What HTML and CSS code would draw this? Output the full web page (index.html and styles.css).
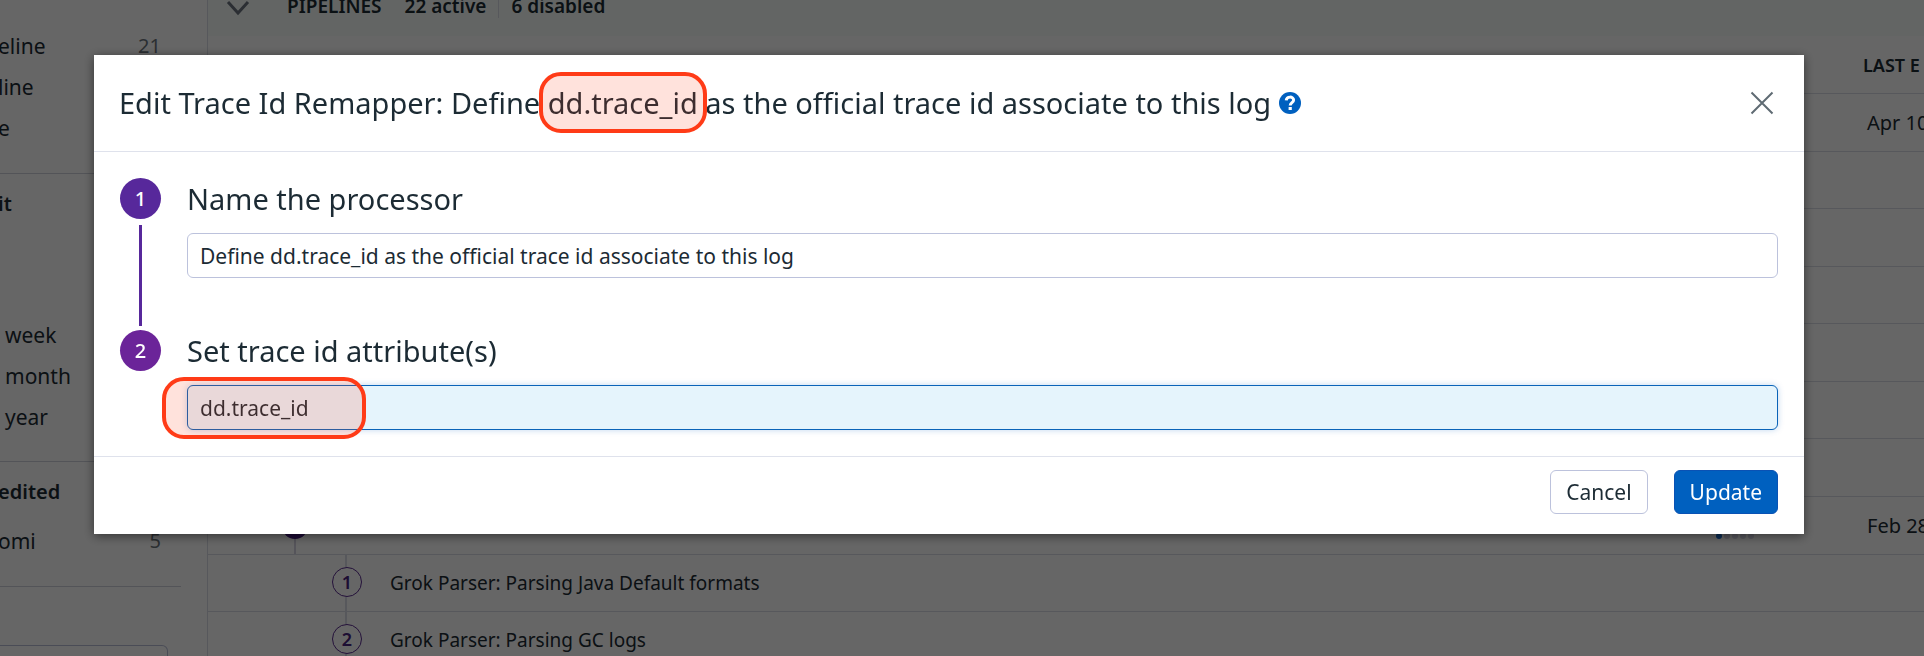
FILE: index.html
```html
<!DOCTYPE html>
<html lang="en">
<head>
<meta charset="utf-8">
<title>Edit Trace Id Remapper</title>
<link rel="stylesheet" href="styles.css">
</head>
<body>
<div class="page">
  <aside class="sidebar">
    <section class="facet facet-first">
      <div class="facet-row"><span>eline</span><span class="count">21</span></div>
      <div class="facet-row"><span>line</span></div>
      <div class="facet-row"><span>e</span></div>
    </section>
    <section class="facet facet-dates">
      <h3 class="facet-title">it</h3>
      <div class="facet-row indent"><span>week</span></div>
      <div class="facet-row indent"><span>month</span></div>
      <div class="facet-row indent"><span>year</span></div>
    </section>
    <section class="facet facet-users">
      <h3 class="facet-title">edited</h3>
      <div class="facet-row"><span>omi</span><span class="count">5</span></div>
    </section>
    <div class="sidebar-box"></div>
  </aside>
  <main class="main">
    <header class="bar">
      <svg class="chevron" viewBox="0 0 24 16" aria-hidden="true"><path d="M2 2l10 11L22 2"/></svg>
      <strong class="bar-title">PIPELINES</strong>
      <strong class="bar-active">22 active</strong>
      <strong class="bar-disabled">6 disabled</strong>
    </header>
    <table class="pipelines">
      <colgroup><col><col class="col-edited"></colgroup>
      <thead><tr><th></th><th scope="col">LAST E</th></tr></thead>
      <tbody>
        <tr><td></td><td>Apr 10</td></tr>
        <tr><td></td><td></td></tr>
        <tr><td></td><td></td></tr>
        <tr><td></td><td></td></tr>
        <tr><td></td><td></td></tr>
        <tr><td></td><td></td></tr>
        <tr><td></td><td></td></tr>
        <tr>
          <td><div class="parent"><span class="node"></span><span class="dots"><i></i><i></i><i></i><i></i><i></i></span></div></td>
          <td>Feb 28</td>
        </tr>
        <tr><td><div class="child"><span class="num">1</span>Grok Parser: Parsing Java Default formats</div></td><td></td></tr>
        <tr><td><div class="child"><span class="num">2</span>Grok Parser: Parsing GC logs</div></td><td></td></tr>
      </tbody>
    </table>
  </main>
</div>

<div class="overlay">
  <form class="modal" role="dialog" aria-modal="true" aria-labelledby="modal-title">
    <header class="modal-header">
      <h2 class="modal-title" id="modal-title">Edit Trace Id Remapper: Define <span class="mark mark-title">dd.trace_id</span> as the official trace id associate to this log</h2>
      <svg class="help" viewBox="0 0 22 22" role="img" aria-label="Help"><circle cx="11" cy="11" r="11"/><path d="M7.200 8.400C7.600 4 14.600 4.200 14.600 8c0 2.600-3.400 2.600-3.400 5.400"/><rect x="9.600" y="15" width="3.200" height="3"/></svg>
      <button class="close" type="button" aria-label="Close"><svg viewBox="0 0 24 24"><path d="M1.500 1.500l21 21M22.500 1.500l-21 21"/></svg></button>
    </header>
    <div class="modal-body">
      <div class="step">
        <div class="rail"><span class="badge">1</span><span class="line"></span></div>
        <div class="field">
          <label class="label" for="name">Name the processor</label>
          <input class="input" id="name" type="text" value="Define dd.trace_id as the official trace id associate to this log">
        </div>
      </div>
      <div class="step">
        <div class="rail"><span class="badge badge-2">2</span></div>
        <div class="field">
          <label class="label" for="attribute">Set trace id attribute(s)</label>
          <div class="mark mark-input"><input class="input input-active" id="attribute" type="text" value="dd.trace_id"></div>
        </div>
      </div>
    </div>
    <footer class="modal-footer">
      <button class="btn" type="button">Cancel</button>
      <button class="btn btn-primary" type="submit">Update</button>
    </footer>
  </form>
</div>
</body>
</html>
```

FILE: styles.css
```css
*, *::after { box-sizing: border-box; }

body {
  margin: 0;
  background: #fff;
  color: #1c2b34;
  font: 20px/28px "Noto Sans", sans-serif;
}

button, input { font: inherit; color: inherit; }

/* Page behind the dialog */
.page {
  display: flex;
  height: 100vh;
  overflow: hidden;
}

.sidebar {
  flex: 0 0 208px;
  border-right: 1px solid #dadde6;
}

.facet {
  margin-right: 26px;
  border-bottom: 1px solid #cfd2dc;
}
.facet-first { padding: 26px 0 24px; }
.facet-dates { padding: 10px 0 23px; }
.facet-users { padding: 10px 0 24px; }

.facet-row {
  display: flex;
  justify-content: space-between;
  height: 41px;
  padding: 6px 20px 7px 0;
  font-size: 21px;
  text-indent: -2px;
}
.indent { padding-left: 7px; }
.count { color: #6c757d; font-size: 20px; }

.facet-title {
  height: 41px;
  margin: 0;
  padding: 6px 0;
  font-size: 20px;
  font-weight: 600;
  text-indent: -2px;
}
.facet-dates .facet-title { margin-bottom: 90px; }
.facet-users .facet-title { margin-bottom: 8px; }

.sidebar-box {
  height: 46px;
  margin: 58px 39px 0 0;
  border: 1px solid #b9bfd8;
  border-left: 0;
  border-radius: 0 6px 6px 0;
}

.main { flex: 1; min-width: 0; }

.bar {
  display: flex;
  align-items: flex-start;
  height: 36px;
  padding-left: 18px;
  background: #f7fdf9;
  font-size: 19px;
  line-height: 12px;
}
.bar strong { font-weight: 600; }
.chevron {
  width: 24px;
  height: 16px;
  margin-right: 37px;
  fill: none;
  stroke: #6c7480;
  stroke-width: 3;
}
.bar-title { margin-right: 23px; }
.bar-active { padding-right: 12px; }
.bar-disabled { padding: 0 0 6px 12px; border-left: 1px solid #dadde6; }

.pipelines {
  width: 100%;
  table-layout: fixed;
  border-collapse: separate;
  border-spacing: 0;
}
.col-edited { width: 61px; }
.pipelines th, .pipelines td {
  height: 58px;
  padding: 0;
  border-bottom: 1px solid #dadde6;
  text-align: left;
  white-space: nowrap;
}
.pipelines tbody tr:nth-child(even) td { height: 57px; }
.pipelines tbody tr:nth-child(n+9) td { height: 57px; }
.pipelines th { font-size: 18px; font-weight: 600; }
.pipelines td + td { padding-left: 4px; }

.parent, .child {
  display: flex;
  align-items: center;
}
.parent {
  height: 57px;
  justify-content: space-between;
  padding: 0 109px 0 74px;
  background: linear-gradient(#d5d2e0, #d5d2e0) 86px 100% / 2px 28px no-repeat;
}
.node {
  width: 26px;
  height: 26px;
  border-radius: 50%;
  background: #451a80;
}
.dots { display: flex; gap: 2px; padding-top: 20px; }
.dots i {
  width: 6px;
  height: 6px;
  border-radius: 50%;
  background: #d9d8ea;
}
.dots i:first-child { background: #1c6ed0; }

.child {
  gap: 28px;
  height: 56px;
  padding-left: 124px;
  background: linear-gradient(#dadde6, #dadde6) 137px 0 / 2px 100% no-repeat;
  font-size: 19px;
}
.num {
  width: 30px;
  height: 30px;
  margin-bottom: 2px;
  border: 1px solid #5b2c91;
  border-radius: 50%;
  background: #fff;
  color: #4a2380;
  font-size: 18px;
  font-weight: 600;
  line-height: 28px;
  text-align: center;
}

/* Dialog */
.overlay {
  position: fixed;
  inset: 0;
  padding: 55px 120px 0 94px;
  background: rgba(0, 0, 0, .6);
}

.modal {
  background: #fff;
  box-shadow: 0 2px 10px rgba(0, 0, 0, .5);
}

.modal-header {
  display: flex;
  align-items: center;
  gap: 8px;
  height: 97px;
  padding: 0 27px 0 25px;
  border-bottom: 1px solid #dfe2ec;
}
.modal-title {
  margin: 0;
  font-size: 29px;
  font-weight: 400;
  line-height: 40px;
}
.help { width: 22px; height: 22px; fill: #0060bf; }
.help path { fill: none; stroke: #fff; stroke-width: 3; }
.help rect { fill: #fff; }
.close {
  display: flex;
  margin-left: auto;
  padding: 3px;
  border: 0;
  background: none;
}
.close svg {
  width: 24px;
  height: 24px;
  fill: none;
  stroke: #5f6b73;
  stroke-width: 2;
}

.modal-body { padding: 26px; }
.step { display: flex; gap: 26px; }
.step + .step { padding-top: 4px; }
.rail {
  display: flex;
  flex: 0 0 41px;
  flex-direction: column;
  align-items: center;
}
.badge {
  width: 41px;
  height: 41px;
  border-radius: 50%;
  background: #57289b;
  color: #fff;
  font-weight: 500;
  line-height: 41px;
  text-align: center;
}
.badge-2 { background: #6b2499; }
.line {
  flex: 1;
  width: 3px;
  margin-top: 6px;
  background: #57289b;
}
.field { flex: 1; min-width: 0; }
.step:first-child .field { padding-bottom: 48px; }
.label {
  display: block;
  margin-bottom: 13px;
  font-size: 29px;
  line-height: 42px;
}
.input {
  display: block;
  width: 100%;
  height: 45px;
  padding: 0 12px;
  border: 1px solid #bcc2dc;
  border-radius: 6px;
  background: #fff;
  font-size: 21px;
  outline: 0;
}
.input-active {
  border-color: #0a63b8;
  background: #e5f4fc;
  box-shadow: 0 0 6px rgba(0, 96, 191, .25);
}

/* Red callouts laid over the attribute name */
.mark { position: relative; }
.mark::after {
  content: "";
  position: absolute;
  border: 4px solid #ff3b17;
  border-radius: 22px;
  background: rgba(255, 59, 23, .15);
  pointer-events: none;
}
.mark-title::after { inset: -11px -9px; }
.mark-input::after { top: -8px; bottom: -9px; left: -25px; width: 204px; }

.modal-footer {
  display: flex;
  justify-content: flex-end;
  gap: 26px;
  padding: 13px 26px 20px;
  border-top: 1px solid #dfe2ec;
}
.btn {
  height: 44px;
  padding: 0 15px;
  border: 1px solid #bcc2dc;
  border-radius: 6px;
  background: #fff;
  font-size: 21px;
}
.btn-primary {
  border-color: #0a52b4;
  background: #0060bf;
  color: #fff;
}
```
